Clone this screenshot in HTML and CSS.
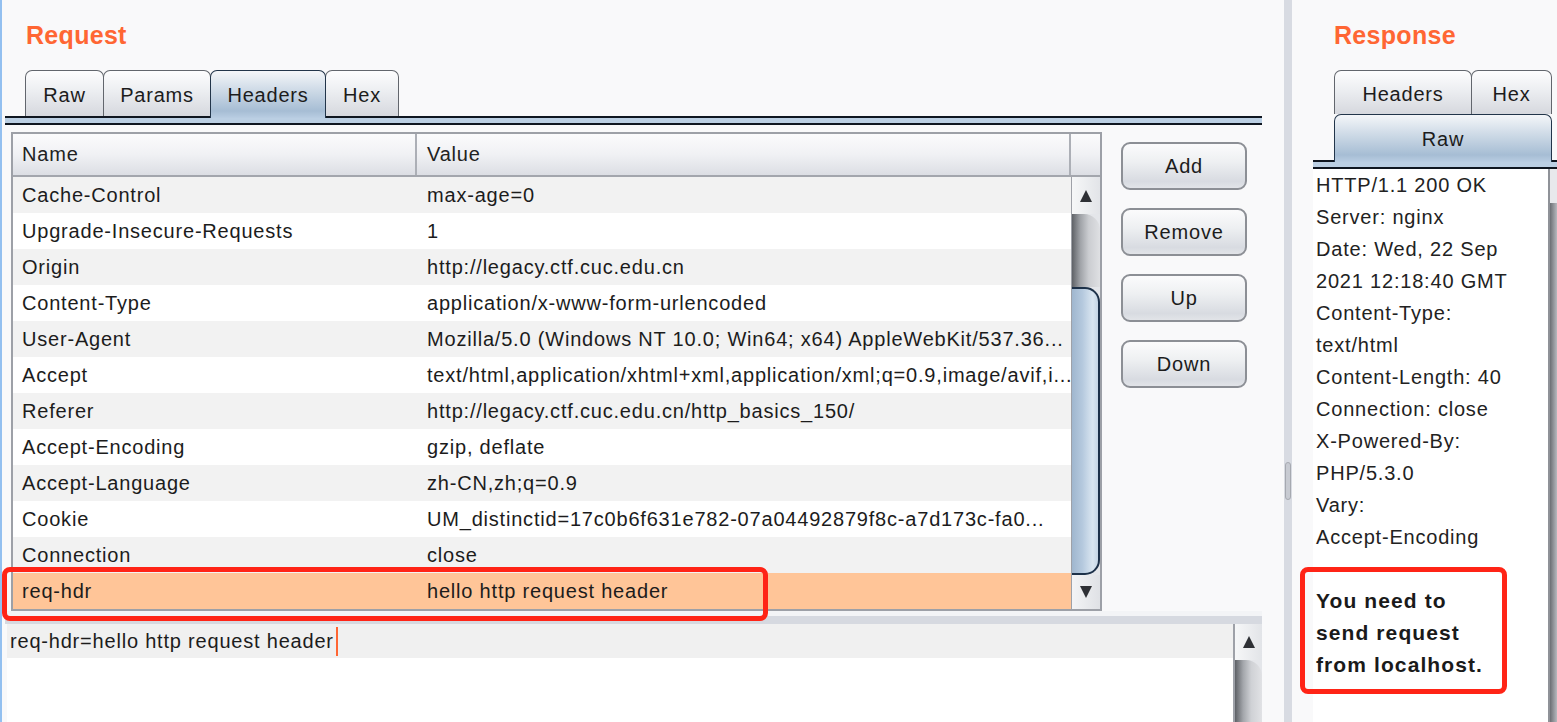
FILE: index.html
```html
<!DOCTYPE html>
<html>
<head>
<meta charset="utf-8">
<title>Request / Response</title>
<link rel="stylesheet" href="styles.css">
</head>
<body>
<div class="app">
  <section class="req">
    <h2 class="title">Request</h2>
    <div class="tabbar">
      <div class="tab t-raw">Raw</div>
      <div class="tab t-params">Params</div>
      <div class="tab sel t-headers">Headers</div>
      <div class="tab t-hex">Hex</div>
    </div>
    <div class="strip"></div>
    <div class="req-body">
      <div class="table">
        <div class="thead">
          <div class="th-name">Name</div>
          <div class="th-val">Value</div>
          <div class="th-corner"></div>
        </div>
        <div class="tbody">
          <div class="rows">
            <div class="row"><div class="c-name">Cache-Control</div><div class="c-val">max-age=0</div></div>
            <div class="row"><div class="c-name">Upgrade-Insecure-Requests</div><div class="c-val">1</div></div>
            <div class="row"><div class="c-name">Origin</div><div class="c-val">http://legacy.ctf.cuc.edu.cn</div></div>
            <div class="row"><div class="c-name">Content-Type</div><div class="c-val">application/x-www-form-urlencoded</div></div>
            <div class="row"><div class="c-name">User-Agent</div><div class="c-val">Mozilla/5.0 (Windows NT 10.0; Win64; x64) AppleWebKit/537.36...</div></div>
            <div class="row"><div class="c-name">Accept</div><div class="c-val">text/html,application/xhtml+xml,application/xml;q=0.9,image/avif,i...</div></div>
            <div class="row"><div class="c-name">Referer</div><div class="c-val">http://legacy.ctf.cuc.edu.cn/http_basics_150/</div></div>
            <div class="row"><div class="c-name">Accept-Encoding</div><div class="c-val">gzip, deflate</div></div>
            <div class="row"><div class="c-name">Accept-Language</div><div class="c-val">zh-CN,zh;q=0.9</div></div>
            <div class="row"><div class="c-name">Cookie</div><div class="c-val">UM_distinctid=17c0b6f631e782-07a04492879f8c-a7d173c-fa0...</div></div>
            <div class="row"><div class="c-name">Connection</div><div class="c-val">close</div></div>
            <div class="row sel"><div class="c-name">req-hdr</div><div class="c-val">hello http request header</div></div>
          </div>
          <div class="vs">
            <div class="vs-up"><span class="arr-up"></span></div>
            <div class="vs-track"></div>
            <div class="vs-thumb"></div>
            <div class="vs-down"><span class="arr-down"></span></div>
          </div>
        </div>
      </div>
      <div class="btns">
        <div class="btn">Add</div>
        <div class="btn">Remove</div>
        <div class="btn">Up</div>
        <div class="btn">Down</div>
      </div>
    </div>
    <div class="hsplit"></div>
    <div class="editor">
      <div class="ed-text">
        <div class="ed-line">req-hdr=hello http request header<span class="caret"></span></div>
      </div>
      <div class="ed-vs">
        <div class="vs-up ed-up"><span class="arr-up"></span></div>
        <div class="ed-track"></div>
      </div>
    </div>
  </section>
  <div class="vsplit"><span class="grip"></span></div>
  <section class="resp">
    <h2 class="title">Response</h2>
    <div class="rtab-row1">
      <div class="tab rt-headers">Headers</div>
      <div class="tab rt-hex">Hex</div>
    </div>
    <div class="rtab-row2">
      <div class="tab sel rt-raw">Raw</div>
    </div>
    <div class="strip rstrip"></div>
    <div class="rbody">
      <div class="rtext">
        <div>HTTP/1.1 200 OK</div>
        <div>Server: nginx</div>
        <div>Date: Wed, 22 Sep</div>
        <div>2021 12:18:40 GMT</div>
        <div>Content-Type:</div>
        <div>text/html</div>
        <div>Content-Length: 40</div>
        <div>Connection: close</div>
        <div>X-Powered-By:</div>
        <div>PHP/5.3.0</div>
        <div>Vary:</div>
        <div>Accept-Encoding</div>
        <div class="blank"></div>
        <div class="b">You need to</div>
        <div class="b">send request</div>
        <div class="b">from localhost.</div>
      </div>
      <div class="rvs"></div>
    </div>
  </section>
</div>
<div class="hl hl-left"></div>
<div class="hl hl-right"></div>
</body>
</html>
```
FILE: styles.css
```css
* { box-sizing: border-box; }
html, body { margin: 0; padding: 0; }
body {
  width: 1557px;
  height: 722px;
  overflow: hidden;
  position: relative;
  background: #f9f9fa;
  font-family: "Liberation Sans", Arial, sans-serif;
  font-size: 20px;
  letter-spacing: 0.8px;
  color: #1c1c1c;
}
.app {
  display: flex;
  height: 722px;
  border-left: 2px solid #93c0f0;
}
.req {
  width: 1282px;
  flex: none;
  padding: 0 22px 0 3px;
  display: flex;
  flex-direction: column;
}
.title {
  margin: 0;
  height: 70px;
  padding: 21px 0 0 21px;
  font-size: 25px;
  line-height: 28px;
  font-weight: bold;
  color: #ff6633;
  letter-spacing: 0.3px;
}
.tabbar {
  display: flex;
  align-items: flex-end;
  height: 46px;
  padding-left: 20px;
}
.tab {
  height: 46px;
  padding: 3px 0 0;
  border: 1px solid #62666d;
  border-bottom: none;
  border-radius: 7px 7px 0 0;
  background: linear-gradient(#fdfdfe, #eceef1 45%, #d6d8de);
  display: flex;
  align-items: center;
  justify-content: center;
  margin-left: -1px;
  white-space: nowrap;
}
.tab:first-child { margin-left: 0; }
.t-raw { width: 79px; }
.t-params { width: 108px; }
.t-headers { width: 116px; }
.t-hex { width: 74px; }
.tab.sel {
  height: 48px;
  margin-bottom: -2px;
  padding-bottom: 2px;
  border-color: #22354a;
  background: linear-gradient(#f4f6f9, #cfdbe7 40%, #a6bdd4 85%, #b9cde2);
  position: relative;
  z-index: 1;
}
.strip {
  height: 9px;
  flex: none;
  border-top: 2px solid #0f1620;
  border-bottom: 2px solid #0f1620;
  background: #bbcfe3;
}
.req-body {
  display: flex;
  align-items: flex-start;
  gap: 19px;
  height: 486px;
  padding: 7px 0 0 6px;
  flex: none;
}
.table {
  width: 1091px;
  height: 479px;
  border: 2px solid #9da0a7;
  background: #fff;
  display: flex;
  flex-direction: column;
}
.thead {
  display: flex;
  height: 43px;
  flex: none;
  border-bottom: 2px solid #a3a6ad;
  background: linear-gradient(#fbfbfc, #f0f1f4 50%, #dcdee4);
  color: #222;
}
.th-name {
  width: 404px;
  border-right: 2px solid #acafb6;
  padding-left: 9px;
  display: flex;
  align-items: center;
}
.th-val {
  width: 654px;
  border-right: 2px solid #acafb6;
  padding-left: 10px;
  display: flex;
  align-items: center;
}
.th-corner { flex: 1; }
.tbody { display: flex; flex: 1; }
.rows { width: 1058px; }
.row {
  display: flex;
  height: 36px;
  padding-top: 1px;
  align-items: center;
  background: #fff;
}
.row:nth-child(odd) { background: #f2f2f2; }
.row.sel { background: #ffc598; }
.c-name { width: 404px; padding-left: 9px; white-space: nowrap; }
.c-val { flex: 1; padding-left: 10px; white-space: nowrap; overflow: hidden; }
.vs {
  flex: 1;
  border-left: 1px solid #9ea1a8;
  display: flex;
  flex-direction: column;
  background: #e4e6ea;
}
.vs-up {
  height: 37px;
  flex: none;
  background: linear-gradient(to right, #f6f7f8, #e2e4e8);
  display: flex;
  justify-content: center;
  align-items: center;
}
.arr-up {
  width: 0; height: 0;
  border-left: 6px solid transparent;
  border-right: 6px solid transparent;
  border-bottom: 12px solid #2e3035;
}
.arr-down {
  width: 0; height: 0;
  border-left: 6px solid transparent;
  border-right: 6px solid transparent;
  border-top: 12px solid #2e3035;
}
.vs-track {
  height: 73px;
  flex: none;
  border-top-right-radius: 16px;
  background: linear-gradient(to right, #5f6267, #a0a3a8 30%, #cbcdd1 60%, #dfe0e3);
}
.vs-thumb {
  height: 288px;
  flex: none;
  border: 2px solid #1d3149;
  border-left: none;
  border-radius: 0 15px 15px 0;
  background: linear-gradient(to right, #9fb6ce, #b5c9de 40%, #dae6f1 80%, #c5d5e5);
}
.vs-down {
  flex: 1;
  background: linear-gradient(to right, #f3f4f6, #dfe1e5);
  display: flex;
  justify-content: center;
  align-items: center;
}
.btns {
  display: flex;
  flex-direction: column;
  gap: 18px;
  padding-top: 10px;
}
.btn {
  width: 126px;
  height: 48px;
  border: 2px solid #8c8f95;
  border-radius: 9px;
  background: linear-gradient(#fbfbfc, #eef0f2 40%, #d8dbe1 85%, #e2e4e8);
  display: flex;
  align-items: center;
  justify-content: center;
}
.hsplit {
  height: 13px;
  flex: none;
  background: linear-gradient(#f3f4f6 0 5px, #d6d9e0 5px);
}
.editor {
  flex: 1;
  display: flex;
  padding-left: 2px;
}
.ed-text { flex: 1; background: #fff; }
.ed-line {
  height: 34px;
  background: #f0f0f0;
  display: flex;
  align-items: center;
  padding-left: 3px;
  white-space: nowrap;
}
.caret {
  display: inline-block;
  width: 2px;
  height: 29px;
  margin-left: 2px;
  background: #ff6633;
}
.ed-vs {
  width: 29px;
  border-left: 2px solid #9ea1a8;
  display: flex;
  flex-direction: column;
  background: #e4e6ea;
}
.ed-up { height: 36px; }
.ed-track {
  flex: 1;
  border-top-right-radius: 16px;
  background: linear-gradient(to right, #5e6166, #a3a6ab 30%, #cfd1d5 60%, #e1e2e5);
}
.vsplit {
  width: 8px;
  flex: none;
  background: #d8dbe2;
  padding-top: 462px;
}
.grip {
  display: block;
  width: 6px;
  height: 38px;
  margin: 0 auto;
  border: 1px solid #a6a9b0;
  border-radius: 3px;
  background: #c8cbd2;
}
.resp {
  flex: 1;
  min-width: 0;
  display: flex;
  flex-direction: column;
  padding-left: 21px;
}
.resp .title { padding-left: 21px; }
.rtab-row1 {
  display: flex;
  height: 44px;
  flex: none;
  padding-left: 21px;
}
.rtab-row1 .tab { height: 44px; padding-top: 4px; }
.rt-headers { width: 138px; }
.rt-hex { width: 81px; }
.rtab-row2 {
  display: flex;
  align-items: flex-end;
  height: 46px;
  flex: none;
  padding-left: 21px;
}
.rt-raw { width: 218px; }
.rbody { flex: 1; display: flex; }
.rtext {
  width: 235px;
  flex: none;
  background: #fff;
  padding-left: 3px;
  line-height: 32px;
  white-space: nowrap;
  color: #222;
}
.rtext .blank { height: 32px; }
.rtext .b {
  font-weight: bold;
  font-size: 21px;
  letter-spacing: 1.1px;
  color: #1a1a1a;
}
.rvs {
  flex: 1;
  border-left: 2px solid #8f9298;
  background: linear-gradient(#e8e9ec 0 34px, transparent 34px), linear-gradient(to right, #6c6f74, #b7b9be);
}
.hl {
  position: absolute;
  border: 5px solid #ff2416;
  border-radius: 8px;
}
.hl-left { left: 2px; top: 567px; width: 766px; height: 54px; }
.hl-right { left: 1300px; top: 567px; width: 207px; height: 127px; }
```
